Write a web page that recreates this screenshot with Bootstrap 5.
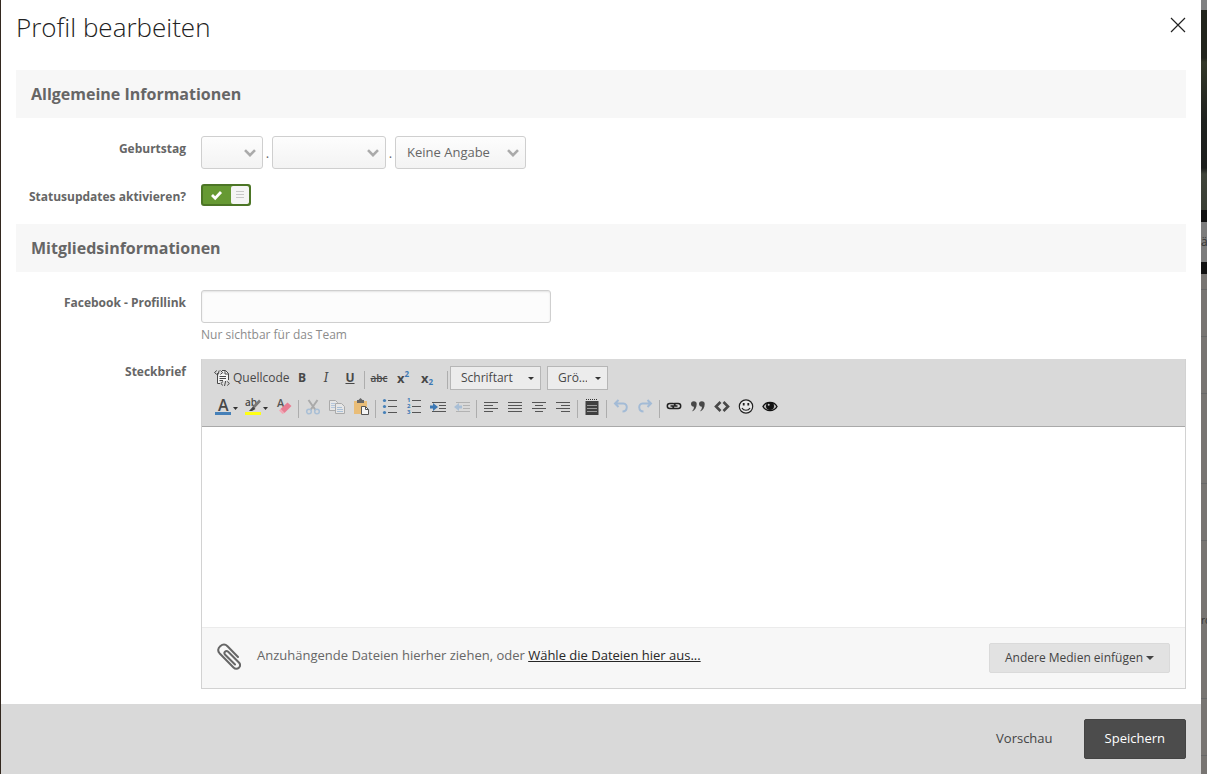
<!DOCTYPE html>
<html lang="de">
<head>
<meta charset="utf-8">
<meta name="viewport" content="width=device-width, initial-scale=1">
<title>Profil bearbeiten</title>
<link href="https://cdn.jsdelivr.net/npm/bootstrap@5.3.0/dist/css/bootstrap.min.css" rel="stylesheet">
<style>
  body { font-family: "Open Sans", "Noto Sans", sans-serif; font-size: 13px; line-height: 20px; color: #666; background: #33281f; }
  .sheet { background: #fff; margin-left: 1px; min-width: 0; }
  .sheet-head { padding: 7px 15px 0; height: 70px; }
  .sheet-title { font-size: 26px; line-height: 40px; font-weight: 300; color: #222; margin: 0; }
  .close-x { width: 16px; height: 16px; margin-top: 10px; color: #222; }
  .sheet-main { padding: 0 15px 15px; }
  .section-bar { background: #f7f7f7; font-size: 16px; line-height: 24px; font-weight: 700; padding: 12px 15px; margin: 0; color: #666; }
  .section-body { padding: 18px 0 17px; }
  .field { gap: 15px; }
  .field-next { margin-top: 15px; }
  .field-label { width: 170px; font-size: 12px; line-height: 20px; font-weight: 700; text-align: right; padding-top: 3px; flex: none; }
  .field-control { flex: 1 1 0; min-width: 0; }
  .date-select { height: 33px; padding: 0 30px 2px 11px; font-size: 13px; line-height: 20px; color: #666; border: 1px solid #cfcfcf; border-radius: 3px;
    background: url("data:image/svg+xml,%3Csvg xmlns='http://www.w3.org/2000/svg' width='12' height='8'%3E%3Cpath d='M1 1.2l5 5 5-5' fill='none' stroke='%23aaa' stroke-width='2.6'/%3E%3C/svg%3E") no-repeat right 6px center, linear-gradient(#fdfdfd, #f3f3f3); }
  .w-day { width: 62px; } .w-month { width: 114px; } .w-year { width: 131px; }
  .dot { width: 9px; text-align: center; }
  .toggle-box { appearance: none; display: block; width: 50px; height: 22px; margin: 0; border: 2px solid #4c7526; border-radius: 3px;
    background: #669933 url("data:image/svg+xml,%3Csvg xmlns='http://www.w3.org/2000/svg' width='46' height='18'%3E%3Crect x='28' width='18' height='18' rx='2' fill='%23f5f5f5'/%3E%3Cpath d='M33 5.5h8M33 8.5h8M33 11.5h8' stroke='%23c8c8c8'/%3E%3Cpath d='M9 9l3.2 3.2L18 6' fill='none' stroke='%23fff' stroke-width='2.8'/%3E%3C/svg%3E") no-repeat center; }
  .link-input { width: 350px; max-width: 100%; height: 33px; border: 1px solid #cfcfcf; border-radius: 3px; background: #fcfcfc; box-shadow: inset 0 1px 2px #0000001a; font-size: 13px; }
  .hint { font-size: 12px; line-height: 16px; color: #8c8c8c; margin-top: 4px; }
  .editor { border: 1px solid #d2d2d2; border-top: 0; }
  .tools { background: #d9d9d9; border-bottom: 1px solid #a9a9a9; padding: 7px 10px 8px; height: 68px; }
  .tools-row { height: 24px; }
  .tools-row + .tools-row { margin-top: 5px; }
  .tool { border: 0; background: none; padding: 0; width: 24px; height: 24px; flex: none; display: flex; align-items: center; justify-content: center; color: #484848; font-size: 12px; line-height: 24px; font-weight: 700; }
  .tool svg { display: block; overflow: visible; }
  .tool-wide { width: 78px; font-weight: 400; justify-content: flex-start; gap: 3px; padding-left: 2px; color: #484848; }
  .tool-drop { width: 30px; }
  .tool-serif { font-family: "DejaVu Serif", serif; font-style: italic; font-weight: 400; }
  .tool-strike { font-size: 10px; font-weight: 600; text-decoration: line-through; }
  .tool-raise { font-size: 13px; }
  .mini { font-size: 8px; color: #3c78b4; line-height: 8px; }
  .split { width: 1px; height: 18px; background: #adadad; margin: 3px 2px 0; flex: none; }
  .split-gap { margin-left: 8px; }
  .pick { height: 24px; border: 1px solid #b6b6b6; border-radius: 0; color: #484848; font-size: 12px; line-height: 20px; padding: 0 20px 0 10px; margin: 0 6px 0 0;
    background: #ececec url("data:image/svg+xml,%3Csvg xmlns='http://www.w3.org/2000/svg' width='6' height='3'%3E%3Cpath d='M0 0h6L3 3z' fill='%23333'/%3E%3C/svg%3E") no-repeat right 6px center; }
  .pick-font { width: 91px; } .pick-size { width: 61px; }
  .write-area { display: block; height: 200px; border: 0; border-radius: 0; resize: none; font-size: 13px; }
  .attach { background: #f7f7f7; border-top: 1px solid #ebebeb; padding: 15px; min-height: 61px; }
  .attach-text { padding-top: 2px; margin-left: 16px; }
  .attach a { color: #272727; text-decoration: underline; }
  .media-btn { background: #e2e2e2; border: 1px solid #dadada; border-radius: 2px; font-size: 12px; line-height: 18px; color: #444; padding: 5px 15px; height: 30px; }
  .media-btn::after { margin-left: 3px; border-top-width: 4px; border-left-width: 4px; border-right-width: 4px; vertical-align: 2px; }
  .sheet-foot { background: #d9d9d9; height: 70px; padding: 0 15px; gap: 10px; }
  .foot-btn { height: 40px; padding: 0 20px; font-size: 13px; border-radius: 2px; border: 1px solid transparent; }
  .foot-save, .foot-save:hover { background: #4c4c4c; color: #fff; border-color: #444; }
  .foot-plain { color: #444; }
  .behind { width: 6px; flex: none; overflow: hidden; background: #787572; color: #333; font-size: 12px; }
  .b-top { height: 10px; background: #808182; }
  .b-photo { height: 200px; background: linear-gradient(#22251d 0, #22251d 24%, #343829 26%, #1f221f 55%, #1c1e1c 79%, #40443a 82%, #3a3e35 100%); }
  .b-bar { height: 12px; background: #101010; }
  .b-tab { height: 40px; line-height: 40px; background: #7c7c7c; }
  .b-line { border-bottom: 1px solid #686868; }
  .b-short { height: 16px; } .b-half { height: 47px; } .b-mid { height: 57px; } .b-tall { height: 90px; } .b-text { height: 158px; line-height: 158px; font-size: 10px; }
</style>
</head>
<body>
<div class="d-flex min-vh-100">
  <div class="sheet d-flex flex-column flex-grow-1">
    <header class="sheet-head d-flex justify-content-between align-items-start">
      <h1 class="sheet-title">Profil bearbeiten</h1>
      <button type="button" class="close-x btn border-0 p-0 d-flex" aria-label="Schließen">
        <svg width="16" height="16" viewBox="0 0 16 16" stroke="currentColor" stroke-width="1.2"><path d="M1 1l14 14M15 1L1 15"/></svg>
      </button>
    </header>

    <main class="sheet-main flex-grow-1">
      <h2 class="section-bar">Allgemeine Informationen</h2>
      <div class="section-body">
        <div class="field d-flex">
          <label class="field-label" for="day">Geburtstag</label>
          <div class="field-control d-flex align-items-center">
            <select id="day" class="form-select date-select w-day" aria-label="Tag"><option></option></select>
            <span class="dot">.</span>
            <select class="form-select date-select w-month" aria-label="Monat"><option></option></select>
            <span class="dot">.</span>
            <select class="form-select date-select w-year" aria-label="Jahr"><option>Keine Angabe</option></select>
          </div>
        </div>
        <div class="field field-next d-flex align-items-start">
          <label class="field-label" for="status">Statusupdates aktivieren?</label>
          <div class="field-control"><input id="status" class="toggle-box" type="checkbox" role="switch" checked></div>
        </div>
      </div>

      <h2 class="section-bar">Mitgliedsinformationen</h2>
      <div class="section-body pb-0">
        <div class="field d-flex">
          <label class="field-label" for="fb">Facebook - Profillink</label>
          <div class="field-control">
            <input id="fb" type="text" class="form-control link-input">
            <div class="hint">Nur sichtbar für das Team</div>
          </div>
        </div>
        <div class="field d-flex mt-3">
          <label class="field-label" for="about">Steckbrief</label>
          <div class="field-control editor">
            <div class="tools">
              <div class="tools-row d-flex align-items-center">
                <button type="button" class="tool tool-wide">
                  <svg width="16" height="16" viewBox="0 0 16 16" fill="none" stroke="#484848"><path d="M3.500 3V13.500H6M8 .5h3.500l3 3V10" fill="#f5f5f5"/><path d="M4.500 4H9l5 1v5l-3 1H4.500z" fill="#f5f5f5" stroke="none"/><path d="M11 .5V4h3.500M5.500 6.500H12M5.500 8.500H12M5.500 10.500H9"/><path d="M2.800.5L.5 2.500l2.300 2M6.500.5l2 2-2 2M5.200.5L4 4.500M9 11.500l-2.200 2 2.200 2M13.200 11.500l2.200 2-2.200 2M11.700 11l-1.200 5"/></svg>
                  Quellcode
                </button>
                <button type="button" class="tool">B</button>
                <button type="button" class="tool tool-serif">I</button>
                <button type="button" class="tool text-decoration-underline">U</button>
                <span class="split"></span>
                <button type="button" class="tool tool-strike">abc</button>
                <button type="button" class="tool tool-raise"><span>x</span><span class="mini pb-2">2</span></button>
                <button type="button" class="tool tool-raise"><span>x</span><span class="mini pt-2">2</span></button>
                <span class="split split-gap"></span>
                <select class="form-select pick pick-font" aria-label="Schriftart"><option>Schriftart</option></select>
                <select class="form-select pick pick-size" aria-label="Größe"><option>Grö…</option></select>
              </div>
              <div class="tools-row d-flex align-items-center">
                <button type="button" class="tool tool-drop" aria-label="Textfarbe">
                  <svg width="24" height="16" viewBox="0 0 24 16"><text x="3" y="12" font-size="16" font-weight="600" fill="#484848">A</text><path d="M0 13h16v3H0z" fill="#4580b8"/><path d="M18 8h5l-2.500 3z" fill="#333"/></svg>
                </button>
                <button type="button" class="tool tool-drop" aria-label="Hintergrundfarbe">
                  <svg width="24" height="16" viewBox="0 0 24 16"><text x="0" y="7" font-size="10" font-weight="600" fill="#484848">ab</text><path d="M0 13h16v3H0z" fill="#ffff14"/><path d="M15 1.500L8.500 8.500" stroke="#777" stroke-width="2.600"/><path d="M8 7.500L10.500 10l-3.500 2H4z" fill="#444"/><path d="M18 8h5l-2.500 3z" fill="#333"/></svg>
                </button>
                <button type="button" class="tool" aria-label="Formatierung entfernen">
                  <svg width="16" height="16" viewBox="0 0 16 16"><text x="1" y="8" font-size="11" font-weight="600" fill="#555">A</text><path d="M11.500 3.500L15.500 7l-7 7-4-4z" fill="#e87d92"/><path d="M4.500 10l4 4-2 1L3 11.500z" fill="#f2a5b4"/></svg>
                </button>
                <span class="split"></span>
                <button type="button" class="tool" aria-label="Ausschneiden">
                  <svg width="16" height="16" viewBox="0 0 16 16" fill="none"><path d="M3.500 1l7 10M12.500 1l-7 10" stroke="#aaa" stroke-width="2"/><circle cx="4" cy="12.500" r="2.300" stroke="#a9bfd6" stroke-width="1.500"/><circle cx="12" cy="12.500" r="2.300" stroke="#a9bfd6" stroke-width="1.500"/></svg>
                </button>
                <button type="button" class="tool" aria-label="Kopieren">
                  <svg width="16" height="16" viewBox="0 0 16 16" fill="#e6e6e6" stroke="#aaa"><path d="M.5 1.500h6l2 2v8h-8z"/><path d="M2 4.500h4M2 6.500h4M2 8.500h4" stroke="#b5c7dc"/><path d="M6.500 4.500h6l3 3v7h-9z"/><path d="M8 8.500h5M8 10.500h6M8 12.500h6" stroke="#a9bfd6"/></svg>
                </button>
                <button type="button" class="tool" aria-label="Einfügen">
                  <svg width="16" height="16" viewBox="0 0 16 16"><path d="M1 2h13v13H1z" fill="#e9bd78"/><path d="M4 1h1.500L7.500-1l2 2H11v3H4z" fill="#666"/><path d="M8.500 7.500h4l3 3v5h-7z" fill="#f5f5f5" stroke="#555"/><path d="M12.500 7.500v3h3" fill="none" stroke="#555"/></svg>
                </button>
                <span class="split"></span>
                <button type="button" class="tool" aria-label="Liste">
                  <svg width="16" height="16" viewBox="0 0 16 16"><g fill="#4580b8"><circle cx="2.500" cy="1.500" r="1.600"/><circle cx="2.500" cy="7.500" r="1.600"/><circle cx="2.500" cy="13.500" r="1.600"/></g><path d="M6 1.500h9M6 7.500h9M6 13.500h9" stroke="#555"/></svg>
                </button>
                <button type="button" class="tool" aria-label="Nummerierte Liste">
                  <svg width="16" height="16" viewBox="0 0 16 16"><g fill="#3c78b4" font-size="6" font-weight="700"><text x="1" y="3">1</text><text x="1" y="9">2</text><text x="1" y="15">3</text></g><path d="M6 1.500h9M6 7.500h9M6 13.500h9" stroke="#555"/></svg>
                </button>
                <button type="button" class="tool" aria-label="Einzug vergrößern">
                  <svg width="16" height="16" viewBox="0 0 16 16"><path d="M2 3.500h14M9 6.500h7M9 9.500h7M2 12.500h14" stroke="#555"/><path d="M0 6.500h3V4l5 4-5 4V9.500H0z" fill="#3c78b4"/></svg>
                </button>
                <button type="button" class="tool" aria-label="Einzug verkleinern">
                  <svg width="16" height="16" viewBox="0 0 16 16"><path d="M2 3.500h14M9 6.500h7M9 9.500h7M2 12.500h14" stroke="#b2b2b2"/><path d="M8 6.500H5V4L0 8l5 4V9.500h3z" fill="#a9bfd6"/></svg>
                </button>
                <span class="split"></span>
                <button type="button" class="tool" aria-label="Linksbündig"><svg width="16" height="16" stroke="#555"><path d="M1 3.500h14M1 6.500h9M1 9.500h14M1 12.500h9"/></svg></button>
                <button type="button" class="tool" aria-label="Blocksatz"><svg width="16" height="16" stroke="#555"><path d="M1 3.500h14M1 6.500h14M1 9.500h14M1 12.500h14"/></svg></button>
                <button type="button" class="tool" aria-label="Zentriert"><svg width="16" height="16" stroke="#555"><path d="M1 3.500h14M4 6.500h8M1 9.500h14M4 12.500h8"/></svg></button>
                <button type="button" class="tool" aria-label="Rechtsbündig"><svg width="16" height="16" stroke="#555"><path d="M1 3.500h14M6 6.500h9M1 9.500h14M6 12.500h9"/></svg></button>
                <span class="split"></span>
                <button type="button" class="tool" aria-label="Spoiler">
                  <svg width="14" height="16" viewBox="0 0 14 16"><path d="M.5 2h13v14H.5z" fill="#3f3f3f"/><path d="M1 .5h12" stroke="#333" stroke-dasharray="1 1"/><path d="M2 6.500h10M2 9.500h10M2 12.500h10" stroke="#999"/></svg>
                </button>
                <span class="split"></span>
                <button type="button" class="tool" aria-label="Rückgängig">
                  <svg width="16" height="16" viewBox="0 0 16 16" fill="none" stroke="#a3bbd6" stroke-width="2"><path d="M5.500 1L2 4.500 5.500 8M2 4.500h8.500c4.500 0 4.500 8-1 8"/></svg>
                </button>
                <button type="button" class="tool" aria-label="Wiederherstellen">
                  <svg width="16" height="16" viewBox="0 0 16 16" fill="none" stroke="#a3bbd6" stroke-width="2"><path d="M10.500 1L14 4.500 10.500 8M14 4.500H5.500C1 4.500 1 12.500 6.500 12.500"/></svg>
                </button>
                <span class="split"></span>
                <button type="button" class="tool" aria-label="Link">
                  <svg width="16" height="16" viewBox="0 0 16 16" fill="none" stroke="#222" stroke-width="1.500"><path d="M7.800 9.500h-4a2 2 0 0 1 0-5H7a2 2 0 0 1 2 2M8.200 4.500h4a2 2 0 0 1 0 5H9a2 2 0 0 1-2-2M4.500 7h7"/></svg>
                </button>
                <button type="button" class="tool" aria-label="Zitat">
                  <svg width="16" height="16" viewBox="0 0 16 16" fill="#484848"><path d="M1 5a2.700 2.700 0 0 1 5.700 0C6.700 8.500 5 11.500 1.800 12.500c1.600-1.500 2.200-3 2.100-4.700C2.300 7.800 1 6.500 1 5zM9 5a2.700 2.700 0 0 1 5.700 0c0 3.500-1.700 6.500-4.900 7.500 1.600-1.500 2.200-3 2.100-4.700C10.300 7.800 9 6.500 9 5z"/></svg>
                </button>
                <button type="button" class="tool" aria-label="Code">
                  <svg width="16" height="16" viewBox="0 0 16 16" fill="none" stroke="#484848" stroke-width="2.600"><path d="M6.500 3L2 7.500 6.500 12M9.500 3L14 7.500 9.500 12"/></svg>
                </button>
                <button type="button" class="tool" aria-label="Smileys">
                  <svg width="16" height="16" viewBox="0 0 16 16" fill="none" stroke="#222" stroke-width="1.200"><circle cx="8" cy="7.500" r="6.700" fill="#e9e9e9"/><path d="M4 9c1.500 3 6.500 3 8 0"/><path d="M5.700 4v2.500M10.300 4v2.500" stroke-width="1.800"/></svg>
                </button>
                <button type="button" class="tool" aria-label="Vorschau">
                  <svg width="16" height="16" viewBox="0 0 16 16"><path d="M1 7.500c3-5.500 11-5.500 14 0-3 5.500-11 5.500-14 0z" fill="#bbb" stroke="#111" stroke-width="1.400"/><circle cx="8" cy="7" r="4" fill="#111"/><circle cx="6.700" cy="5.800" r="1" fill="#ccc"/></svg>
                </button>
              </div>
            </div>
            <textarea id="about" class="form-control write-area"></textarea>
            <div class="attach d-flex align-items-start">
              <svg class="flex-shrink-0" width="24" height="28" viewBox="0 0 24 28" fill="none" stroke="#666" stroke-width="2" stroke-linecap="round"><path d="M21 14L10.500 3.200C8.500 1.200 5.500 1.200 3.200 3.200S.5 8 2.500 10.200L16.500 24.500c1.700 1.800 4 1.600 5.400.2s1.500-3.600 0-5.200L11.200 8.800C10 7.700 8.800 7.900 8 8.700S7.200 10.700 8.200 11.800L18 21.500"/></svg>
              <div class="attach-text flex-grow-1">Anzuhängende Dateien hierher ziehen, oder <a href="#">Wähle die Dateien hier aus...</a></div>
              <button type="button" class="btn media-btn dropdown-toggle">Andere Medien einfügen</button>
            </div>
          </div>
        </div>
      </div>
    </main>

    <footer class="sheet-foot d-flex align-items-center justify-content-end">
      <button type="button" class="btn foot-btn foot-plain">Vorschau</button>
      <button type="submit" class="btn foot-btn foot-save">Speichern</button>
    </footer>
  </div>
  <div class="behind" aria-hidden="true">
    <div class="b-top"></div>
    <div class="b-photo"></div>
    <div class="b-bar"></div>
    <div class="b-tab">ä</div>
    <div class="b-bar"></div>
    <div class="b-line b-short"></div>
    <div class="b-line b-half"></div>
    <div class="b-line b-mid"></div>
    <div class="b-line b-tall"></div>
    <div class="b-line b-mid"></div>
    <div class="b-line b-text">ro</div>
    <div class="b-line b-mid"></div>
  </div>
</div>
<script src="https://cdn.jsdelivr.net/npm/bootstrap@5.3.0/dist/js/bootstrap.bundle.min.js"></script>
</body>
</html>
